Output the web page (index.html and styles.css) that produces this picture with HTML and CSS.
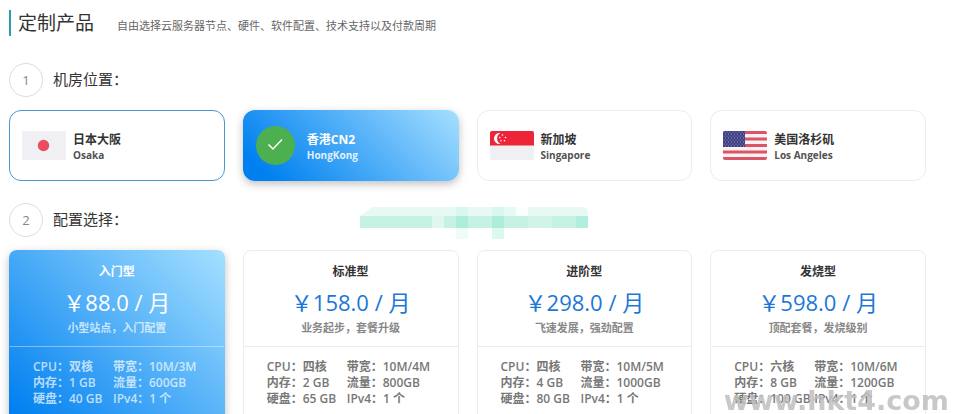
FILE: index.html
```html
<!DOCTYPE html>
<html lang="zh-CN">
<head>
    <meta charset="UTF-8">
    <meta name="viewport" content="width=device-width, initial-scale=1.0">
    <title>定制产品</title>
    <link rel="stylesheet" href="styles.css">
</head>
<body>
<main>
    <header class="page-header">
        <h1>定制产品</h1>
        <p>自由选择云服务器节点、硬件、软件配置、技术支持以及付款周期</p>
    </header>

    <form>
        <!-- Location -->
        <section>
            <div class="step">
                <span class="step-number">1</span>
                <h2>机房位置：</h2>
            </div>
            <div class="cards">
                <label class="location hovered">
                    <input type="radio" name="location" value="osaka">
                    <svg class="flag" viewBox="0 0 44 29">
                        <rect width="44" height="29" rx="1" fill="#f0f0f4"/>
                        <circle cx="21.500" cy="14.500" r="5.700" fill="#ea4d60"/>
                    </svg>
                    <span class="place"><b>日本大阪</b><small>Osaka</small></span>
                </label>
                <label class="location">
                    <input type="radio" name="location" value="hongkong" checked>
                    <svg class="check" viewBox="0 0 39 39">
                        <circle cx="19.500" cy="19.500" r="19.500" fill="#4cb050"/>
                        <path d="M12.500 18.500l4.500 4.500 9-9.500" fill="none" stroke="#fff" stroke-width="1.500"/>
                    </svg>
                    <span class="place"><b>香港CN2</b><small>HongKong</small></span>
                </label>
                <label class="location">
                    <input type="radio" name="location" value="singapore">
                    <svg class="flag" viewBox="0 0 44 29">
                        <rect width="44" height="29" rx="2" fill="#f0f0f2"/>
                        <path d="M0 14.500V2a2 2 0 0 1 2-2h40a2 2 0 0 1 2 2v12.500z" fill="#ee2439"/>
                        <path d="M10.500 2a5.500 5.500 0 1 0 0 10.800a6 6 0 0 1 0-10.800z" fill="#fff"/>
                        <g fill="#fff">
                            <circle cx="12.500" cy="4" r=".8"/>
                            <circle cx="9.800" cy="6.500" r=".8"/>
                            <circle cx="15.500" cy="6.500" r=".8"/>
                            <circle cx="11" cy="9.800" r=".8"/>
                            <circle cx="14.500" cy="9.800" r=".8"/>
                        </g>
                    </svg>
                    <span class="place"><b>新加坡</b><small>Singapore</small></span>
                </label>
                <label class="location">
                    <input type="radio" name="location" value="losangeles">
                    <svg class="flag" viewBox="0 0 44 29">
                        <defs>
                            <clipPath id="us-clip"><rect width="44" height="29" rx="2"/></clipPath>
                            <pattern id="us-stars" width="3" height="4" patternUnits="userSpaceOnUse">
                                <circle cx="1" cy="1" r=".6" fill="#a5a8d4"/>
                                <circle cx="2.500" cy="3" r=".6" fill="#a5a8d4"/>
                            </pattern>
                        </defs>
                        <g clip-path="url(#us-clip)">
                            <rect width="44" height="29" fill="#f7f1f3"/>
                            <path d="M0 1.500h44M0 8h44M0 14.500h44M0 21h44M0 27.500h44" stroke="#db5665" stroke-width="3"/>
                            <rect width="22" height="16" fill="#3c3c80"/>
                            <rect width="22" height="16" fill="url(#us-stars)"/>
                        </g>
                    </svg>
                    <span class="place"><b>美国洛杉矶</b><small>Los Angeles</small></span>
                </label>
            </div>
        </section>

        <!-- Plan -->
        <section>
            <div class="step">
                <span class="step-number">2</span>
                <h2>配置选择：</h2>
                <svg class="mosaic" viewBox="0 0 228 32">
                    <path d="M0 9L12 0H224L228 3V9z" fill="#e8f8f3"/>
                    <rect y="9" width="228" height="12" fill="#c6f1e5"/>
                    <rect x="96" width="12" height="9" fill="#d9f7ee"/>
                    <rect x="132" width="12" height="9" fill="#d9f7ee"/>
                    <rect x="156" width="12" height="9" fill="#fafefd"/>
                    <rect x="72" y="9" width="12" height="12" fill="#e0f7f1"/>
                    <rect x="96" y="9" width="12" height="12" fill="#adeddc"/>
                    <rect x="132" y="9" width="12" height="12" fill="#adeddc"/>
                    <rect x="168" y="9" width="24" height="12" fill="#d0f4ea"/>
                    <rect x="216" y="9" width="12" height="12" fill="#b1eedd"/>
                    <rect x="96" y="21" width="12" height="11" fill="#effcf7"/>
                    <rect x="132" y="21" width="12" height="11" fill="#dcf9ef"/>
                </svg>
            </div>
            <div class="cards">
                <label class="plan">
                    <input type="radio" name="plan" value="88" checked>
                    <span class="plan-head">
                        <b>入门型</b>
                        <span class="price">￥88.0 / 月</span>
                        <span class="desc">小型站点，入门配置</span>
                    </span>
                    <span class="specs">
                        <span>CPU：双核</span><span>带宽：10M/3M</span>
                        <span>内存：1 GB</span><span>流量：600GB</span>
                        <span>硬盘：40 GB</span><span>IPv4：1 个</span>
                    </span>
                </label>
                <label class="plan">
                    <input type="radio" name="plan" value="158">
                    <span class="plan-head">
                        <b>标准型</b>
                        <span class="price">￥158.0 / 月</span>
                        <span class="desc">业务起步，套餐升级</span>
                    </span>
                    <span class="specs">
                        <span>CPU：四核</span><span>带宽：10M/4M</span>
                        <span>内存：2 GB</span><span>流量：800GB</span>
                        <span>硬盘：65 GB</span><span>IPv4：1 个</span>
                    </span>
                </label>
                <label class="plan">
                    <input type="radio" name="plan" value="298">
                    <span class="plan-head">
                        <b>进阶型</b>
                        <span class="price">￥298.0 / 月</span>
                        <span class="desc">飞速发展，强劲配置</span>
                    </span>
                    <span class="specs">
                        <span>CPU：四核</span><span>带宽：10M/5M</span>
                        <span>内存：4 GB</span><span>流量：1000GB</span>
                        <span>硬盘：80 GB</span><span>IPv4：1 个</span>
                    </span>
                </label>
                <label class="plan">
                    <input type="radio" name="plan" value="598">
                    <span class="plan-head">
                        <b>发烧型</b>
                        <span class="price">￥598.0 / 月</span>
                        <span class="desc">顶配套餐，发烧级别</span>
                    </span>
                    <span class="specs">
                        <span>CPU：六核</span><span>带宽：10M/6M</span>
                        <span>内存：8 GB</span><span>流量：1200GB</span>
                        <span>硬盘：100 GB</span><span>IPv4：1 个</span>
                    </span>
                </label>
            </div>
        </section>
    </form>
</main>
<div class="watermark">www.hkt4.com</div>
</body>
</html>
```
FILE: styles.css
```css
* {
    box-sizing: border-box;
}

body {
    font-family: "Open Sans", "Noto Sans CJK SC", sans-serif;
    background-color: #ffffff;
    color: #333333;
    margin: 0;
    height: 100vh;
    overflow: hidden;
}

main {
    padding: 10px 35px 0 9px;
}

h1, h2, p {
    margin: 0;
    font-weight: normal;
}

.page-header {
    display: flex;
    align-items: center;
    gap: 23px;
    height: 26px;
    margin-bottom: 27px;
    border-left: 2px solid #2b9db0;
    padding-left: 7px;
}

.page-header h1 {
    font-size: 19px;
    line-height: 26px;
}

.page-header p {
    font-size: 11px;
    line-height: 16px;
    padding-top: 6px;
    color: #666666;
}

.step {
    display: flex;
    align-items: center;
    height: 34px;
    margin-bottom: 13px;
}

.step-number {
    width: 34px;
    height: 34px;
    border: 1px solid #dddddd;
    border-radius: 50%;
    font-size: 13px;
    line-height: 32px;
    text-align: center;
    color: #888888;
}

.step h2 {
    width: 307px;
    margin-left: 10px;
    padding-bottom: 2px;
    font-size: 15px;
    line-height: 20px;
}

.mosaic {
    width: 228px;
    height: 32px;
    margin-top: 6px;
}

.cards {
    display: grid;
    grid-template-columns: repeat(4, 1fr);
    gap: 18px;
    margin-bottom: 22px;
}

.location, .plan {
    border: 1px solid #ececec;
    border-radius: 12px;
    cursor: pointer;
}

.location input, .plan input {
    appearance: none;
    position: absolute;
    margin: 0;
}

.location {
    display: flex;
    align-items: center;
    gap: 7px;
    height: 71px;
    padding: 0 12px;
}

.location.hovered {
    border-color: #4a96cf;
}

.location:has(input:checked), .plan:has(input:checked) {
    border-color: transparent;
    background: linear-gradient(45deg, #0080f0 10%, #a5e0ff) border-box;
    box-shadow: 0 3px 9px rgba(0, 0, 0, 0.25);
    color: #ffffff;
}

.flag {
    width: 44px;
    height: 29px;
}

.check {
    width: 39px;
    height: 39px;
    margin-right: 5px;
}

.place {
    display: flex;
    flex-direction: column;
    padding-top: 3px;
}

.place b {
    font-size: 12px;
    line-height: 16px;
}

.place small {
    font-size: 10px;
    font-weight: bold;
    line-height: 15px;
    opacity: 0.85;
}

.plan {
    border-radius: 8px;
    height: 200px;
}

.plan-head {
    display: flex;
    flex-direction: column;
    align-items: center;
    padding: 12px 0 10px;
    border-bottom: 1px solid #ececec;
}

.plan-head b {
    font-size: 12px;
    line-height: 18px;
}

.price {
    font-size: 22px;
    line-height: 30px;
    padding: 6px 0 2px;
    color: #1b77d8;
}

.desc {
    font-size: 11px;
    font-weight: 600;
    line-height: 17px;
    color: #888888;
}

.specs {
    display: grid;
    grid-template-columns: 80px auto;
    justify-content: start;
    padding: 12px 0 0 23px;
    font-size: 12px;
    font-weight: 600;
    line-height: 16px;
    color: #777777;
    white-space: nowrap;
}

.plan:has(input:checked) .plan-head {
    border-color: rgba(255, 255, 255, 0.4);
}

.plan:has(input:checked) .price {
    color: #ffffff;
}

.plan:has(input:checked) .desc, .plan:has(input:checked) .specs {
    color: rgba(255, 255, 255, 0.7);
}

.watermark {
    position: fixed;
    right: 12px;
    bottom: -3px;
    font-family: "DejaVu Sans", sans-serif;
    font-size: 27px;
    font-weight: bold;
    line-height: 32px;
    color: rgba(190, 190, 190, 0.85);
    pointer-events: none;
}
```
